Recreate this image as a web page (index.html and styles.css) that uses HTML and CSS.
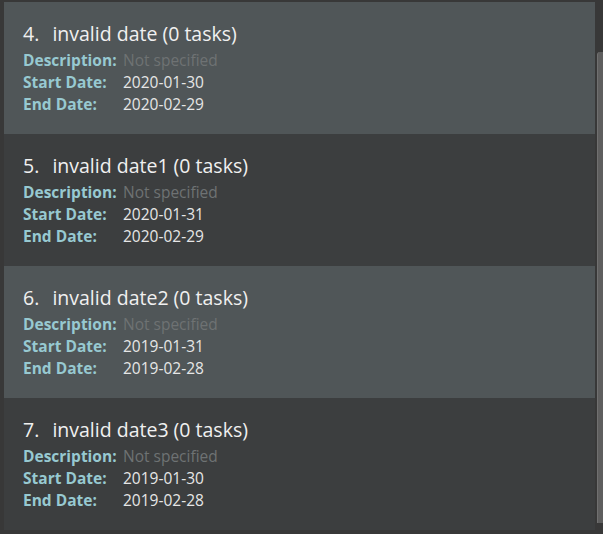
FILE: index.html
```html
<!DOCTYPE html>
<html>
<head>
<meta charset="utf-8">
<link rel="stylesheet" href="styles.css">
</head>
<body>
<div class="viewport">
  <div class="list">
    <div class="card light">
      <div class="title"><span class="num">4.</span>  invalid date (0 tasks)</div>
      <div class="fields">
        <span class="label">Description:</span><span class="value muted">Not specified</span>
        <span class="label">Start Date:</span><span class="value">2020-01-30</span>
        <span class="label">End Date:</span><span class="value">2020-02-29</span>
      </div>
    </div>
    <div class="card dark">
      <div class="title"><span class="num">5.</span>  invalid date1 (0 tasks)</div>
      <div class="fields">
        <span class="label">Description:</span><span class="value muted">Not specified</span>
        <span class="label">Start Date:</span><span class="value">2020-01-31</span>
        <span class="label">End Date:</span><span class="value">2020-02-29</span>
      </div>
    </div>
    <div class="card light">
      <div class="title"><span class="num">6.</span>  invalid date2 (0 tasks)</div>
      <div class="fields">
        <span class="label">Description:</span><span class="value muted">Not specified</span>
        <span class="label">Start Date:</span><span class="value">2019-01-31</span>
        <span class="label">End Date:</span><span class="value">2019-02-28</span>
      </div>
    </div>
    <div class="card dark">
      <div class="title"><span class="num">7.</span>  invalid date3 (0 tasks)</div>
      <div class="fields">
        <span class="label">Description:</span><span class="value muted">Not specified</span>
        <span class="label">Start Date:</span><span class="value">2019-01-30</span>
        <span class="label">End Date:</span><span class="value">2019-02-28</span>
      </div>
    </div>
  </div>
  <div class="scrolltrack"><div class="thumb"></div></div>
</div>
</body>
</html>
```
FILE: styles.css
```css
html, body {
  margin: 0;
  padding: 0;
  background: #383838;
  width: 603px;
  height: 534px;
  overflow: hidden;
}
.viewport {
  display: flex;
  height: 534px;
  padding: 2px 0 0 4px;
  box-sizing: border-box;
  font-family: "Open Sans", "Noto Sans", sans-serif;
}
.list {
  width: 591px;
  display: flex;
  flex-direction: column;
}
.card {
  height: 132px;
  box-sizing: border-box;
  padding: 18px 0 0 19px;
}
.light { background: #505658; }
.dark { background: #3c3e3f; }
.title {
  white-space: pre;
  color: #f0f0f0;
  font-size: 19.5px;
  line-height: 27px;
}
.num {
  margin-right: 3px;
}
.fields {
  display: grid;
  grid-template-columns: 100px auto;
  grid-auto-rows: 22px;
  margin-top: 2px;
  font-size: 15.5px;
  line-height: 22px;
}
.label {
  color: #97c9d1;
  font-weight: 700;
}
.value { color: #e6e6e6; }
.muted { color: #6e7273; }
.scrolltrack {
  flex: 1;
  position: relative;
}
.thumb {
  position: absolute;
  left: 2px;
  top: 50px;
  width: 6px;
  height: 471px;
  background: #5e5e5e;
  border-left: 1px solid #707070;
  border-radius: 3px 0 0 0;
}
```
